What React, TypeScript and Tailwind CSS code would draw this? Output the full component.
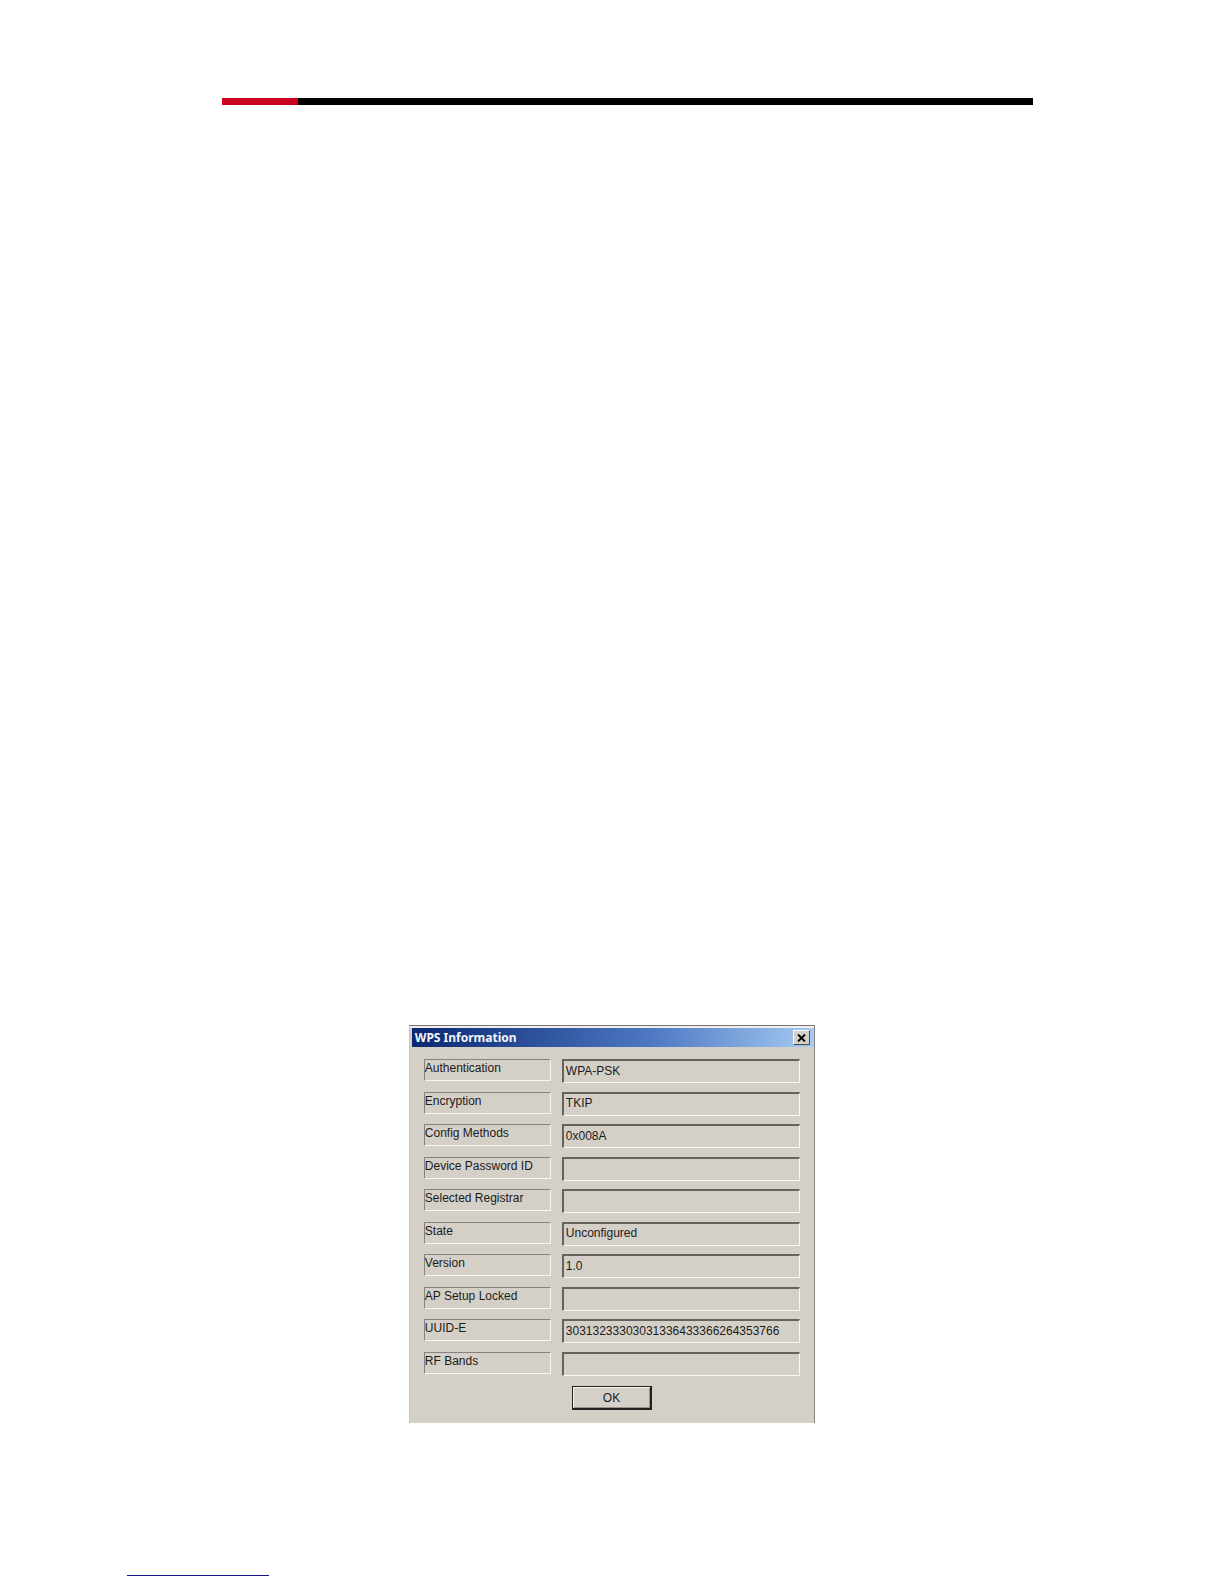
import { useId } from "react";

const rows = [
  { label: "Authentication", value: "WPA-PSK" },
  { label: "Encryption", value: "TKIP" },
  { label: "Config Methods", value: "0x008A" },
  { label: "Device Password ID", value: "" },
  { label: "Selected Registrar", value: "" },
  { label: "State", value: "Unconfigured" },
  { label: "Version", value: "1.0" },
  { label: "AP Setup Locked", value: "" },
  { label: "UUID-E", value: "30313233303031336433366264353766" },
  { label: "RF Bands", value: "" },
];

function Field({ label, value }: { label: string; value: string }) {
  const id = useId();
  return (
    <div className="flex items-start gap-[11px]">
      <label
        htmlFor={id}
        className="h-[22px] w-[127px] shrink-0 border border-t-[#858380] border-r-[#f6f5f2] border-b-[#f6f5f2] border-l-[#858380] text-xs"
      >
        {label}
      </label>
      <input
        id={id}
        readOnly
        defaultValue={value}
        className="h-6 w-full min-w-0 border-t-2 border-r border-b border-l-2 border-t-[#65625f] border-r-[#f8f7f4] border-b-[#f8f7f4] border-l-[#65625f] bg-transparent pb-0.5 pl-0.5 text-xs outline-none"
      />
    </div>
  );
}

function Dialog() {
  return (
    <section
      role="dialog"
      aria-labelledby="dialog-title"
      className="mt-[920px] ml-[33.4%] w-[33.2%] border-t border-r border-t-[#74767c] border-r-[#85858a] bg-[#d4d0c8] font-['Liberation_Sans',Arial,sans-serif] text-[#1c1b1a]"
    >
      <div className="border-t-2 border-l border-t-[#f0efea] border-l-[#c9c7bd] pl-0.5">
        <header className="flex h-[19px] items-center justify-between bg-linear-to-r from-[#0c2872] via-[#4f79c4] via-60% to-[#a6caf0] pr-1 pl-[3px]">
          <h1
            id="dialog-title"
            className="font-['Noto_Sans',sans-serif] text-xs font-bold text-[#f4f6fb]"
          >
            WPS Information
          </h1>
          <button
            type="button"
            aria-label="Close"
            className="flex h-[15px] w-[17px] items-center justify-center border border-t-white border-r-[#4c4a48] border-b-[#4c4a48] border-l-white bg-[#d4d0c8] text-black"
          >
            <svg width="9" height="8" viewBox="0 0 9 8" aria-hidden="true">
              <path d="M1 0.5L8 7.5M8 0.5L1 7.5" stroke="currentColor" strokeWidth="1.9" />
            </svg>
          </button>
        </header>
        <form className="pt-3 pr-3.5 pb-[13px] pl-3">
          <div className="flex h-[317px] flex-col justify-between">
            {rows.map((row) => (
              <Field key={row.label} {...row} />
            ))}
          </div>
          <button
            type="button"
            className="mx-auto mt-2.5 block h-6 w-20 border border-r-2 border-b-2 border-[#23211f] text-xs shadow-[inset_1px_1px_#f4f3ef,inset_-1px_-1px_#96938d]"
          >
            OK
          </button>
        </form>
      </div>
    </section>
  );
}

export default function App() {
  return (
    <div className="flex min-h-screen flex-col bg-white">
      <main className="mt-[98px]">
        <div className="mr-[15.6%] ml-[18.1%] flex h-[7px]">
          <div className="w-[76px] bg-[#cc0020]" />
          <div className="flex-1 bg-black" />
        </div>
        <Dialog />
      </main>
      <footer className="mt-auto pb-2 pl-[127px]">
        <div className="h-px w-[142px] bg-[#16168c]" />
      </footer>
    </div>
  );
}
